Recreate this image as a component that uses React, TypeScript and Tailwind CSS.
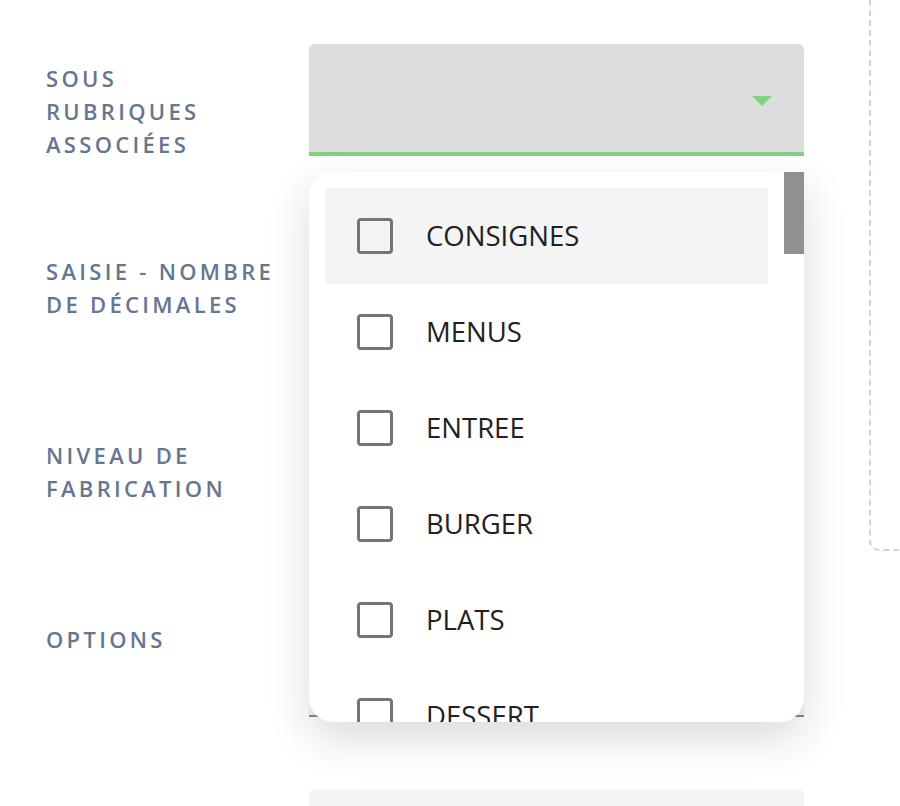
import React from "react";

const labels: string[][] = [
  ["SOUS", "RUBRIQUES", "ASSOCIÉES"],
  ["SAISIE - NOMBRE", "DE DÉCIMALES"],
  ["NIVEAU DE", "FABRICATION"],
  ["OPTIONS"],
  [""],
];

const items = ["CONSIGNES", "MENUS", "ENTREE", "BURGER", "PLATS", "DESSERT"];

function Label({ lines }: { lines: string[] }) {
  return (
    <div className="w-[263px] shrink-0 pt-[18px] text-[22px] leading-[33px] font-semibold tracking-[0.15em] text-[#66768f]">
      {lines.map((l, i) => (
        <div key={i} className="whitespace-nowrap">
          {l}
        </div>
      ))}
    </div>
  );
}

export default function App() {
  return (
    <div
      className="relative w-[900px] h-[806px] overflow-hidden bg-white"
      style={{ fontFamily: '"Open Sans", "Noto Sans", sans-serif' }}
    >
      <div className="flex">
        {/* form column */}
        <div className="w-[869px] shrink-0 pl-[46px] pt-[44px] flex flex-col">
          {/* Row 1 - focused field */}
          <div className="flex h-[112px]">
            <Label lines={labels[0]} />
            <div className="w-[495px] h-[112px] shrink-0 rounded-t-[6px] bg-[#dddddd] border-b-4 border-[#7dd67f] flex items-center justify-end pr-[32px] pt-[6px]">
              <div className="w-0 h-0 border-l-[10px] border-r-[10px] border-t-[10px] border-l-transparent border-r-transparent border-t-[#7dd67f]" />
            </div>
          </div>
          {/* Rows 2 - 5 */}
          <div className="flex h-[112px] mt-[81px]">
            <Label lines={labels[1]} />
            <div className="w-[495px] h-[112px] shrink-0 rounded-t-[6px] bg-[#f5f5f5] border-b-2 border-[#8a8a8a]" />
          </div>
          <div className="flex h-[112px] mt-[72px]">
            <Label lines={labels[2]} />
            <div className="w-[495px] h-[112px] shrink-0 rounded-t-[6px] bg-[#f5f5f5] border-b-2 border-[#8a8a8a]" />
          </div>
          <div className="flex h-[112px] mt-[72px]">
            <Label lines={labels[3]} />
            <div className="w-[495px] h-[112px] shrink-0 rounded-t-[6px] bg-[#f5f5f5] border-b-2 border-[#8a8a8a]" />
          </div>
          <div className="flex h-[112px] mt-[72px]">
            <Label lines={labels[4]} />
            <div className="w-[495px] h-[112px] shrink-0 rounded-t-[6px] bg-[#f4f4f4] border-b-2 border-[#8a8a8a]" />
          </div>
        </div>
        {/* right dashed panel */}
        <div className="w-[200px] h-[571px] -mt-[20px] shrink-0 rounded-[10px] border-2 border-dashed border-[#cbd3df]" />
      </div>

      {/* dropdown menu popover */}
      <div className="absolute left-[309px] top-[172px] w-[495px] h-[550px] bg-white rounded-[24px] rounded-tr-none overflow-hidden shadow-[0_16px_44px_rgba(0,0,0,0.15)]">
        <div className="pt-[16px] pl-[16px] pr-[36px]">
          {items.map((it, i) => (
            <div
              key={it}
              className={`flex items-center h-[96px] pl-[32px] ${i === 0 ? "bg-[#f4f4f4]" : ""}`}
            >
              <div className="w-[36px] h-[36px] shrink-0 rounded-[4px] border-[3px] border-[#757575]" />
              <span className="ml-[33px] text-[27.5px] leading-none text-[#212121]">{it}</span>
            </div>
          ))}
        </div>
        {/* scrollbar thumb */}
        <div className="absolute right-0 top-0 w-[20px] h-[82px] bg-[#909090]" />
      </div>
    </div>
  );
}
